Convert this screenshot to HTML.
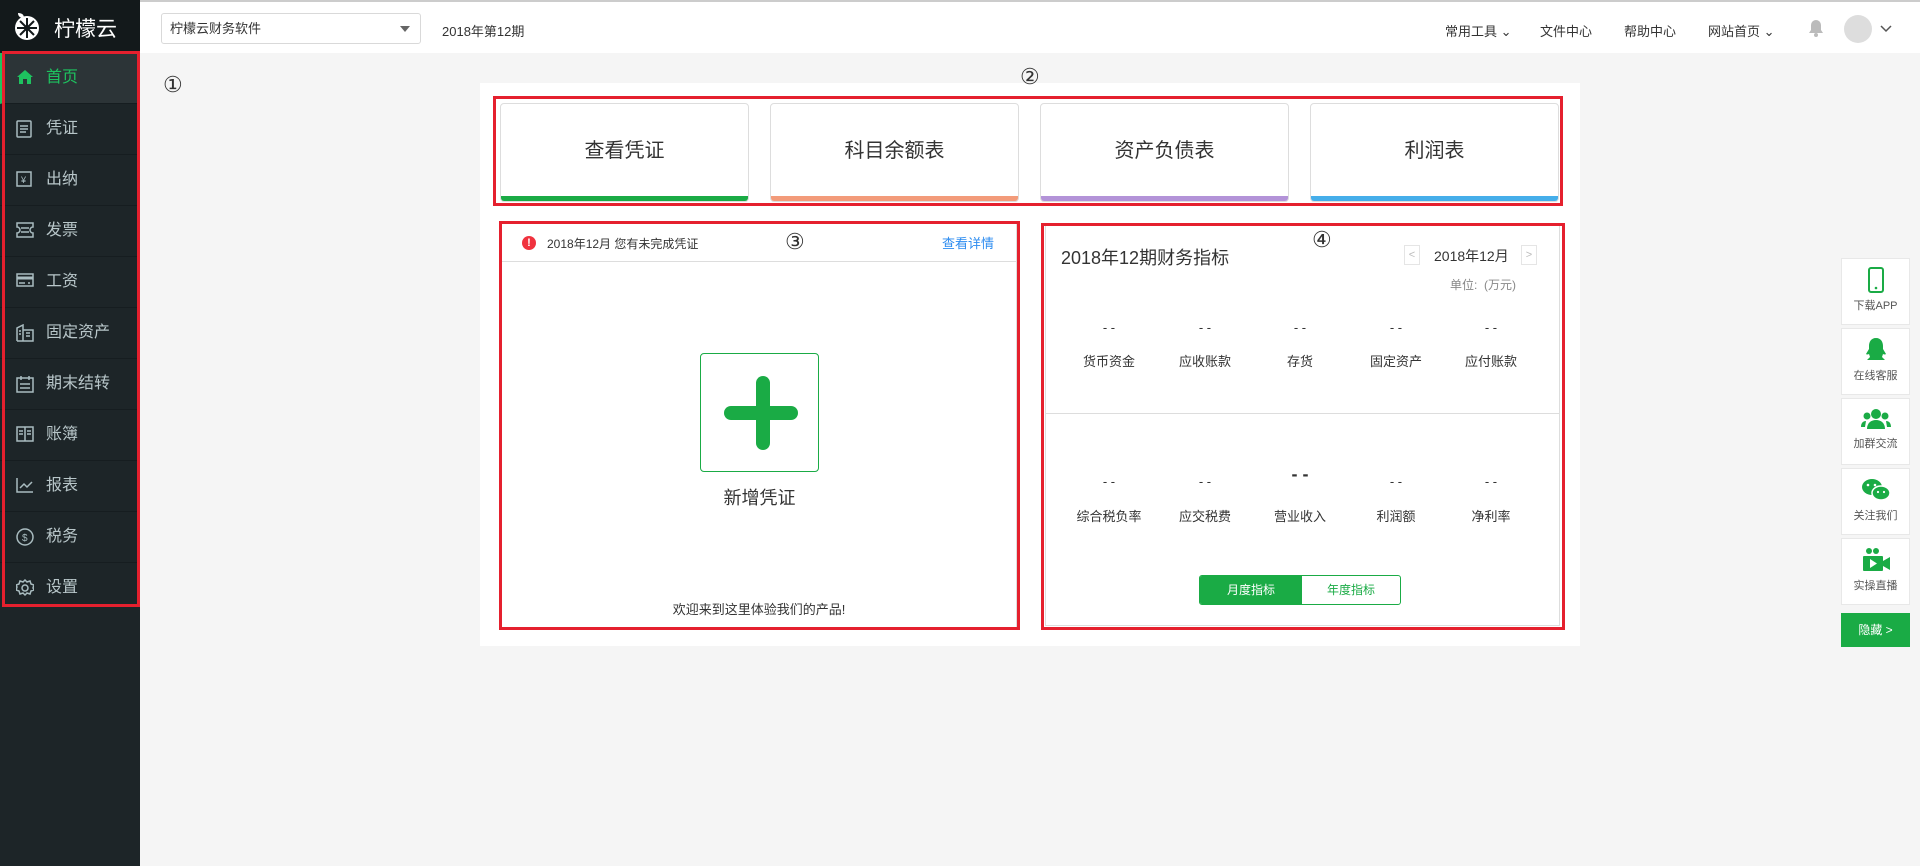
<!DOCTYPE html>
<html><head><meta charset="utf-8"><style>
*{margin:0;padding:0;box-sizing:border-box}
body{width:1920px;height:866px;background:#f5f5f5;font-family:"Liberation Sans","Noto Sans CJK SC",sans-serif;position:relative;overflow:hidden;color:#333}
.abs{position:absolute}
#side{left:0;top:0;width:140px;height:866px;background:#1d2528}
#logo{left:0;top:0;width:140px;height:53px;background:#13191b;color:#fff;font-size:21px}
.nav{position:absolute;left:0;width:140px;height:51px;border-bottom:1px solid #161d20;color:#b8c6c9;font-size:16px;line-height:50px;padding-left:46px}
.nav svg{position:absolute;left:16px;top:16px}
.nav.act{background:#2c3437;color:#1ec25f;border-left:4px solid #1ec25f;padding-left:42px}
.nav.act svg{left:12px}
#hdr{left:140px;top:0;width:1780px;height:53px;background:#fff;border-top:2px solid #ccc}
.red{position:absolute;border:3px solid #e5202e}
.card{position:absolute;top:103px;width:249px;height:99px;background:#fff;border:1px solid #ddd;border-radius:4px;overflow:hidden;text-align:center;line-height:94px;font-size:20px;color:#333}
.card i{position:absolute;left:0;right:0;bottom:0;height:5px}
.ix{position:absolute;width:96px;text-align:center;font-size:13px;color:#333}
.fl{position:absolute;left:1841px;width:69px;height:67px;background:#fff;border:1px solid #e8e8e8;text-align:center;font-size:11px;color:#555}
.fl svg{display:block;margin:8px auto 4px}
</style></head><body>
<div id="side" class="abs">
<div id="logo" class="abs">
<svg class="abs" style="left:12px;top:11px" width="32" height="30" viewBox="0 0 32 30"><circle cx="15" cy="17" r="12" fill="#fff"/><g stroke="#13191b" stroke-width="2"><line x1="15" y1="7" x2="15" y2="27"/><line x1="5" y1="17" x2="25" y2="17"/><line x1="8" y1="10" x2="22" y2="24"/><line x1="22" y1="10" x2="8" y2="24"/></g><circle cx="15" cy="17" r="3" fill="#13191b"/><path d="M6 2 Q12 2 12 7 Q6 7 6 2Z" fill="#fff"/></svg>
<span class="abs" style="left:54px;top:13px">柠檬云</span></div>
<div class="nav act" style="top:53px"><svg width="18" height="16" viewBox="0 0 18 16"><path d="M9 1 L1 8 H3 V15 H7 V10 H11 V15 H15 V8 H17Z" fill="#1ec25f"/></svg>首页</div>
<div class="nav" style="top:104px"><svg width="16" height="18" viewBox="0 0 16 18" fill="none" stroke="#a9bcc0" stroke-width="1.5"><rect x="1" y="1" width="14" height="16" rx="1"/><path d="M4 6h8M4 9h8M4 12h6"/></svg>凭证</div>
<div class="nav" style="top:155px"><svg width="16" height="16" viewBox="0 0 16 16" fill="none" stroke="#a9bcc0" stroke-width="1.5"><rect x="1" y="1" width="14" height="14"/><text x="5" y="12" font-size="9" fill="#a9bcc0" stroke="none">¥</text></svg>出纳</div>
<div class="nav" style="top:206px"><svg width="18" height="16" viewBox="0 0 18 16" fill="none" stroke="#a9bcc0" stroke-width="1.5"><path d="M1 1h16v4a2 2 0 0 0 0 6v4H1v-4a2 2 0 0 0 0-6z"/><path d="M5 6h8M5 10h8"/></svg>发票</div>
<div class="nav" style="top:257px"><svg width="18" height="14" viewBox="0 0 18 14" fill="none" stroke="#a9bcc0" stroke-width="1.5"><rect x="1" y="1" width="16" height="12"/><path d="M1 5h16" stroke-width="3"/><path d="M3 10h6M12 10h2"/></svg>工资</div>
<div class="nav" style="top:308px"><svg width="18" height="18" viewBox="0 0 18 18" fill="none" stroke="#a9bcc0" stroke-width="1.5"><path d="M1 17V4l6-3v16M7 6h10v11H1"/><path d="M3 7h2M3 10h2M10 9h4M10 12h4"/></svg>固定资产</div>
<div class="nav" style="top:359px"><svg width="18" height="18" viewBox="0 0 18 18" fill="none" stroke="#a9bcc0" stroke-width="1.5"><rect x="1" y="3" width="16" height="14"/><path d="M5 1v4M13 1v4M4 9h10M4 13h10"/></svg>期末结转</div>
<div class="nav" style="top:410px"><svg width="18" height="16" viewBox="0 0 18 16" fill="none" stroke="#a9bcc0" stroke-width="1.5"><rect x="1" y="1" width="16" height="14"/><path d="M9 1v14M3 5h4M3 8h4M11 5h4M11 8h4"/></svg>账簿</div>
<div class="nav" style="top:461px"><svg width="18" height="16" viewBox="0 0 18 16" fill="none" stroke="#a9bcc0" stroke-width="1.5"><path d="M1 1v14h16M4 11l4-4 3 3 5-5"/></svg>报表</div>
<div class="nav" style="top:512px"><svg width="18" height="18" viewBox="0 0 18 18" fill="none" stroke="#a9bcc0" stroke-width="1.5"><circle cx="9" cy="9" r="8"/><text x="6" y="13" font-size="10" fill="#a9bcc0" stroke="none">$</text></svg>税务</div>
<div class="nav" style="top:563px;border:none"><svg width="18" height="18" viewBox="0 0 18 18" fill="none" stroke="#a9bcc0" stroke-width="1.5"><circle cx="9" cy="9" r="3"/><path d="M9 1l2 2 3-1 1 3 3 1-1 3 1 2-3 1-1 3-3-1-2 2-2-2-3 1-1-3-3-1 1-3-1-2 3-1 1-3 3 1z"/></svg>设置</div>
</div>
<div class="red" style="left:2px;top:51px;width:138px;height:556px"></div>
<div id="hdr" class="abs">
<div class="abs" style="left:21px;top:11px;width:260px;height:31px;border:1px solid #d9d9d9;border-radius:3px;font-size:13px;line-height:29px;padding-left:8px">柠檬云财务软件<span class="abs" style="right:10px;top:12px;border:5px solid transparent;border-top:6px solid #666;border-bottom:0"></span></div>
<div class="abs" style="left:302px;top:19px;font-size:13px">2018年第12期</div>
<div class="abs" style="left:1305px;top:19px;font-size:13px">常用工具 ⌄</div>
<div class="abs" style="left:1400px;top:19px;font-size:13px">文件中心</div>
<div class="abs" style="left:1484px;top:19px;font-size:13px">帮助中心</div>
<div class="abs" style="left:1568px;top:19px;font-size:13px">网站首页 ⌄</div>
<svg class="abs" style="left:1668px;top:17px" width="16" height="18" viewBox="0 0 16 18"><path d="M8 1a5 5 0 0 0-5 5v5l-2 3h14l-2-3V6a5 5 0 0 0-5-5z" fill="#bbb"/><circle cx="8" cy="16" r="2" fill="#bbb"/></svg>
<div class="abs" style="left:1704px;top:13px;width:28px;height:28px;border-radius:50%;background:#ddd"></div>
<svg class="abs" style="left:1740px;top:23px" width="12" height="8" viewBox="0 0 12 8"><path d="M1 1l5 5 5-5" fill="none" stroke="#555" stroke-width="1.5"/></svg>
</div>
<div class="abs" style="left:163px;top:72px;font-size:22px;font-family:'Liberation Serif',serif">①</div>
<div class="abs" style="left:480px;top:83px;width:1100px;height:563px;background:#fff"></div>
<div class="abs" style="left:1020px;top:64px;font-size:22px;font-family:'Liberation Serif',serif">②</div>
<div class="card" style="left:500px">查看凭证<i style="background:#1aab45"></i></div>
<div class="card" style="left:770px">科目余额表<i style="background:#f39b7a"></i></div>
<div class="card" style="left:1040px">资产负债表<i style="background:#b393d8"></i></div>
<div class="card" style="left:1310px">利润表<i style="background:#45aeea"></i></div>
<div class="red" style="left:493px;top:96px;width:1070px;height:110px"></div>
<div class="abs" style="left:501px;top:223px;width:516px;height:405px;border:1px solid #ddd;background:#fff"></div>
<div class="abs" style="left:501px;top:261px;width:516px;height:1px;background:#ddd"></div>
<div class="abs" style="left:522px;top:236px;width:14px;height:14px;border-radius:50%;background:#f0323e;color:#fff;font-size:11px;font-weight:bold;text-align:center;line-height:14px">!</div>
<div class="abs" style="left:547px;top:235px;font-size:12px">2018年12月 您有未完成凭证</div>
<div class="abs" style="left:942px;top:233px;font-size:13px;color:#2d8cf0">查看详情</div>
<div class="abs" style="left:785px;top:229px;font-size:22px;font-family:'Liberation Serif',serif">③</div>
<div class="abs" style="left:700px;top:353px;width:119px;height:119px;border:1px solid #1aab45;border-radius:4px"></div>
<div class="abs" style="left:756px;top:376px;width:14px;height:74px;border-radius:7px;background:#1aab45"></div>
<div class="abs" style="left:724px;top:406px;width:74px;height:14px;border-radius:7px;background:#1aab45"></div>
<div class="abs" style="left:700px;top:484px;width:119px;text-align:center;font-size:18px">新增凭证</div>
<div class="abs" style="left:501px;top:599px;width:516px;text-align:center;font-size:13px">欢迎来到这里体验我们的产品!</div>
<div class="red" style="left:499px;top:221px;width:521px;height:409px"></div>
<div class="abs" style="left:1045px;top:225px;width:515px;height:401px;border:1px solid #ddd;background:#fff"></div>
<div class="abs" style="left:1061px;top:244px;font-size:18px">2018年12期财务指标</div>
<div class="abs" style="left:1312px;top:227px;font-size:22px;font-family:'Liberation Serif',serif">④</div>
<div class="abs" style="left:1404px;top:245px;width:16px;height:20px;border:1px solid #e5e5e5;color:#bbb;font-size:11px;text-align:center;line-height:18px">&lt;</div>
<div class="abs" style="left:1434px;top:246px;font-size:14px">2018年12月</div>
<div class="abs" style="left:1521px;top:245px;width:16px;height:20px;border:1px solid #e5e5e5;color:#bbb;font-size:11px;text-align:center;line-height:18px">&gt;</div>
<div class="abs" style="left:1450px;top:276px;font-size:12px;color:#888">单位:&nbsp;&nbsp;(万元)</div>
<div class="ix" style="left:1061px;top:320px">- -</div><div class="ix" style="left:1157px;top:320px">- -</div><div class="ix" style="left:1252px;top:320px">- -</div><div class="ix" style="left:1348px;top:320px">- -</div><div class="ix" style="left:1443px;top:320px">- -</div>
<div class="ix" style="left:1061px;top:351px">货币资金</div><div class="ix" style="left:1157px;top:351px">应收账款</div><div class="ix" style="left:1252px;top:351px">存货</div><div class="ix" style="left:1348px;top:351px">固定资产</div><div class="ix" style="left:1443px;top:351px">应付账款</div>
<div class="abs" style="left:1046px;top:413px;width:513px;height:1px;background:#ddd"></div>
<div class="ix" style="left:1061px;top:474px">- -</div><div class="ix" style="left:1157px;top:474px">- -</div><div class="ix" style="left:1252px;top:464px;font-size:18px;font-weight:bold">- -</div><div class="ix" style="left:1348px;top:474px">- -</div><div class="ix" style="left:1443px;top:474px">- -</div>
<div class="ix" style="left:1061px;top:506px">综合税负率</div><div class="ix" style="left:1157px;top:506px">应交税费</div><div class="ix" style="left:1252px;top:506px">营业收入</div><div class="ix" style="left:1348px;top:506px">利润额</div><div class="ix" style="left:1443px;top:506px">净利率</div>
<div class="abs" style="left:1199px;top:575px;width:202px;height:30px;border:1px solid #1aab45;border-radius:3px;overflow:hidden;font-size:12px;line-height:28px">
<div class="abs" style="left:0;top:0;width:102px;height:28px;background:#1aab45;color:#fff;text-align:center">月度指标</div>
<div class="abs" style="left:102px;top:0;width:98px;height:28px;color:#1aab45;text-align:center">年度指标</div></div>
<div class="red" style="left:1041px;top:223px;width:524px;height:407px"></div>
<div class="fl" style="top:258px"><svg width="16" height="26" viewBox="0 0 16 26"><rect x="1" y="1" width="14" height="24" rx="2" fill="none" stroke="#1aab45" stroke-width="2"/><circle cx="8" cy="21" r="1.3" fill="#1aab45"/></svg>下载APP</div>
<div class="fl" style="top:328px"><svg width="24" height="26" viewBox="0 0 24 26"><path d="M12 1c-5 0-7 4-7 8v3l-3 5c1 1 3 0 3 0l1 3-3 3h18l-3-3 1-3s2 1 3 0l-3-5V9c0-4-2-8-7-8z" fill="#1aab45"/></svg>在线客服</div>
<div class="fl" style="top:398px"><svg width="30" height="24" viewBox="0 0 30 24" fill="#1aab45"><circle cx="15" cy="7" r="5"/><path d="M6 22c0-6 4-9 9-9s9 3 9 9z"/><circle cx="6" cy="9" r="3.5"/><circle cx="24" cy="9" r="3.5"/><path d="M0 20c0-4 2-6 5-6l-1 6zM30 20c0-4-2-6-5-6l1 6z"/></svg>加群交流</div>
<div class="fl" style="top:468px"><svg width="30" height="26" viewBox="0 0 30 26"><ellipse cx="11" cy="10" rx="10" ry="8" fill="#1aab45"/><ellipse cx="20" cy="16" rx="9" ry="7" fill="#1aab45" stroke="#fff" stroke-width="1.5"/><circle cx="7" cy="8" r="1.3" fill="#fff"/><circle cx="14" cy="8" r="1.3" fill="#fff"/><circle cx="17" cy="15" r="1.1" fill="#fff"/><circle cx="23" cy="15" r="1.1" fill="#fff"/></svg>关注我们</div>
<div class="fl" style="top:538px"><svg width="30" height="26" viewBox="0 0 30 26" fill="#1aab45"><circle cx="8" cy="4" r="3"/><circle cx="15" cy="4" r="3"/><rect x="2" y="9" width="20" height="15" rx="1"/><path d="M22 14l7-4v13l-7-4z"/><path d="M9 12v9l7-4.5z" fill="#fff"/></svg>实操直播</div>
<div class="abs" style="left:1841px;top:613px;width:69px;height:34px;background:#1aab45;color:#fff;font-size:12px;text-align:center;line-height:34px">隐藏 &gt;</div>
</body></html>
